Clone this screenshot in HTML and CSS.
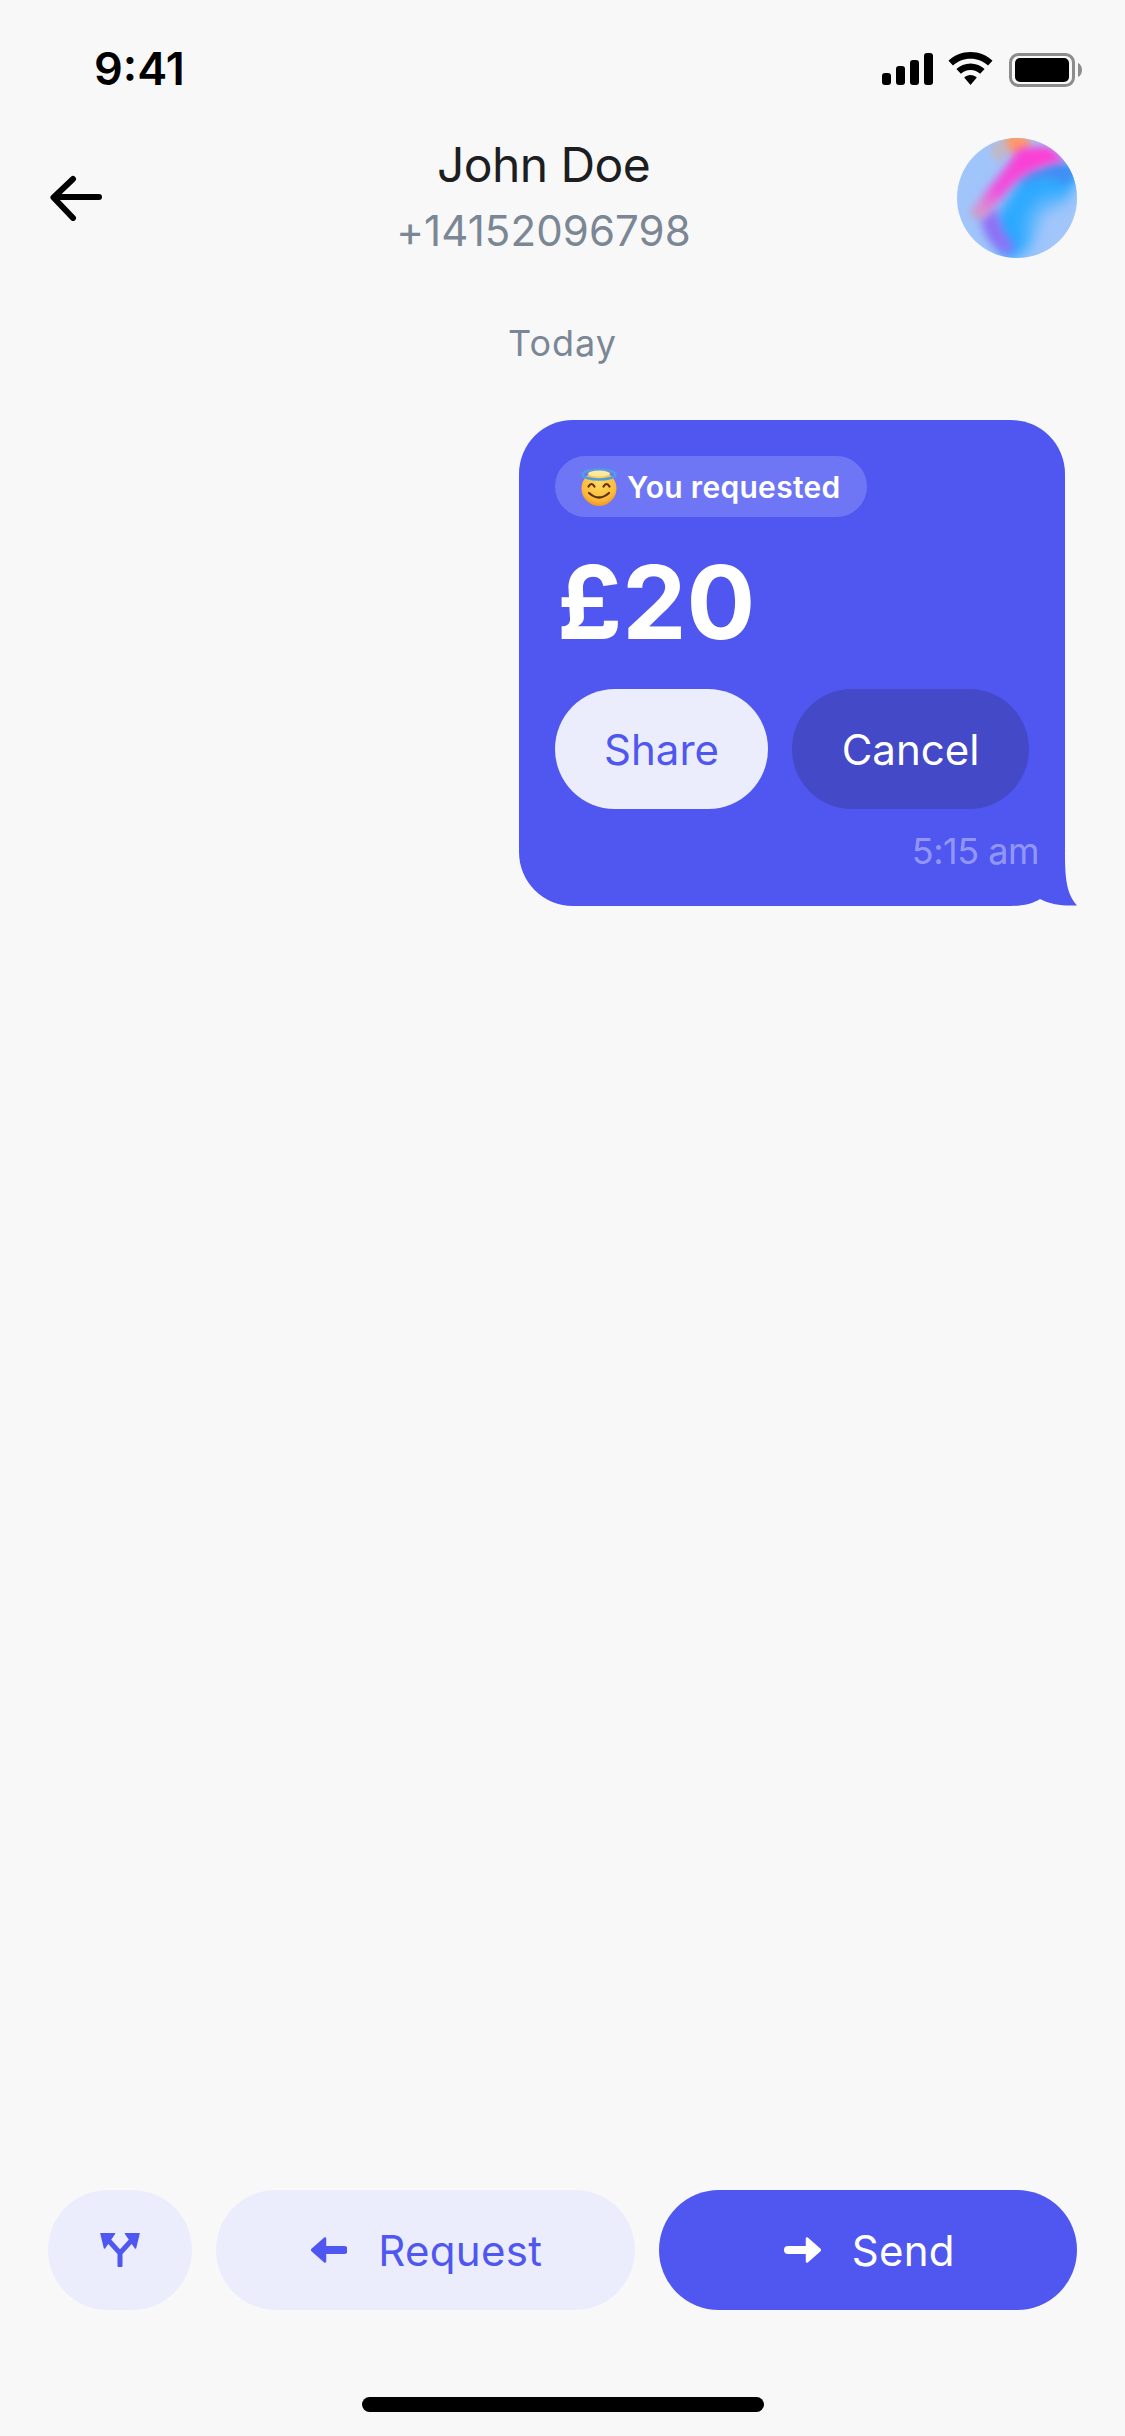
FILE: index.html
```html
<!DOCTYPE html>
<html lang="en">
<head>
<meta charset="utf-8">
<title>John Doe</title>
<link rel="stylesheet" href="styles.css">
</head>
<body>
<div class="screen">
  <div class="status">
    <span class="clock">9:41</span>
    <div class="status-icons">
      <svg class="i-signal" width="51" height="32" viewBox="0 0 51 32"><rect x="0" y="20" width="9" height="12" rx="3"/><rect x="14" y="13" width="9" height="19" rx="3"/><rect x="28" y="7" width="9" height="25" rx="3"/><rect x="42" y="0" width="9" height="32" rx="3"/></svg>
      <svg class="i-wifi" width="45" height="33" viewBox="0 0 45 33"><path d="M22.5 0C14 0 6.300 3.300 0.500 8.700L5 13.500C9.600 9.300 15.700 6.700 22.500 6.700S35.400 9.300 40 13.500L44.500 8.700C38.700 3.300 31 0 22.500 0Z"/><path d="M22.500 11.500C17 11.500 12.100 13.600 8.400 17.100L12.900 21.800C15.400 19.500 18.800 18.100 22.500 18.100S29.600 19.500 32.100 21.800L36.600 17.100C32.900 13.600 28 11.500 22.500 11.500Z"/><path d="M22.500 23C20 23 17.800 24 16.200 25.500L22.500 33L28.800 25.500C27.200 24 25 23 22.500 23Z"/></svg>
      <svg class="i-battery" width="73" height="34" viewBox="0 0 73 34"><rect x="1.500" y="1.500" width="63" height="31" rx="8" fill="none" stroke="#8c8c8c" stroke-width="3"/><rect x="6" y="5" width="54" height="24" rx="5"/><path d="M69 10C71.500 11 73 14 73 17S71.500 23 69 24Z" fill="#8c8c8c"/></svg>
    </div>
  </div>

  <header class="header">
    <div class="back">
      <svg width="54" height="46" viewBox="0 0 54 46"><path d="M51 22H7M25 4L5.500 22.500L25 43" fill="none" stroke="#000" stroke-width="6" stroke-linecap="round" stroke-linejoin="round"/></svg>
    </div>
    <div class="contact">
      <div class="name">John Doe</div>
      <div class="phone">+14152096798</div>
    </div>
    <svg class="avatar" width="120" height="120" viewBox="0 0 120 120">
      <defs>
        <clipPath id="av-clip"><circle cx="60" cy="60" r="60"/></clipPath>
        <linearGradient id="band" gradientUnits="userSpaceOnUse" x1="72" y1="18" x2="14" y2="80">
          <stop offset="0" stop-color="#fb3fd4"/>
          <stop offset="0.55" stop-color="#f04fdc"/>
          <stop offset="0.85" stop-color="#dc8fd0"/>
          <stop offset="1" stop-color="#cf9cac"/>
        </linearGradient>
        <filter id="b4" x="-50%" y="-50%" width="200%" height="200%"><feGaussianBlur stdDeviation="4"/></filter>
        <filter id="b5" x="-50%" y="-50%" width="200%" height="200%"><feGaussianBlur stdDeviation="5"/></filter>
        <filter id="b7" x="-50%" y="-50%" width="200%" height="200%"><feGaussianBlur stdDeviation="7"/></filter>
        <filter id="b12" x="-50%" y="-50%" width="200%" height="200%"><feGaussianBlur stdDeviation="12"/></filter>
      </defs>
      <g clip-path="url(#av-clip)">
        <rect width="120" height="120" fill="#a0c5fb"/>
        <path d="M125 28L66 36L36 84L48 125L70 112L112 58Z" fill="#25a8ff" filter="url(#b7)"/>
        <ellipse cx="98" cy="90" rx="24" ry="28" fill="#a3c6fb" filter="url(#b12)"/>
        <path d="M125 30L100 24L74 34L60 48L86 40L112 46Z" fill="#3f8ff3" filter="url(#b4)"/>
        <path d="M24 78C24 94 34 108 50 118L58 108C48 98 42 88 40 70Z" fill="#8f6ff5" filter="url(#b5)"/>
        <ellipse cx="60" cy="5" rx="14" ry="11" fill="#ff9a68" filter="url(#b4)"/>
        <path d="M62 10L92 8L110 23C84 27 62 38 50 54L26 82L12 76L30 52C42 38 52 24 62 10Z" fill="url(#band)" filter="url(#b4)"/>
        <ellipse cx="42" cy="13" rx="7" ry="10" fill="#c9b4bc" filter="url(#b4)"/>
      </g>
    </svg>
  </header>

  <div class="day">Today</div>

  <article class="bubble">
    <svg class="tail" width="62" height="52" viewBox="0 0 62 52"><path d="M50 0C50 26 52 40 62 51.500L55 51.500C45 51.500 35 50 25 45C19 49 10 51.500 0 51.500V0Z"/></svg>
    <div class="tag">
      <svg class="emoji" width="36" height="38" viewBox="0 0 36 38">
        <defs>
          <radialGradient id="face" cx="50%" cy="35%" r="70%"><stop offset="0" stop-color="#ffdb5e"/><stop offset="0.7" stop-color="#fdb93a"/><stop offset="1" stop-color="#e88a1e"/></radialGradient>
        </defs>
        <circle cx="18" cy="20.500" r="17.500" fill="url(#face)"/>
        <ellipse cx="18" cy="6.500" rx="16.500" ry="5" fill="none" stroke="#4f9fe0" stroke-width="2.500"/>
        <ellipse cx="18" cy="5.500" rx="11" ry="3" fill="#ffe9a0"/>
        <path d="M7.500 18.500Q10.500 13.500 13.500 18.500M22.500 18.500Q25.500 13.500 28.500 18.500" fill="none" stroke="#5a3210" stroke-width="2.200" stroke-linecap="round"/>
        <path d="M8 25Q18 34 28 25" fill="none" stroke="#5a3210" stroke-width="2.200" stroke-linecap="round"/>
      </svg>
      <span>You requested</span>
    </div>
    <div class="amount">£20</div>
    <div class="actions">
      <button class="pill pill-share pill-light">Share</button>
      <button class="pill pill-cancel pill-dark">Cancel</button>
    </div>
    <div class="time">5:15 am</div>
  </article>

  <div class="spacer"></div>

  <footer class="footer">
    <button class="pill pill-round pill-light">
      <svg width="40" height="34" viewBox="0 0 40 34"><path d="M20 32.500V20M20 20L9 8M20 20L31 8" fill="none" stroke="#4f57f0" stroke-width="5" stroke-linecap="round"/><path d="M1 .5H14.500L4.500 15Z M39 .5H25.500L35.500 15Z" fill="#4f57f0" stroke="#4f57f0" stroke-width="1.500" stroke-linejoin="round"/></svg>
    </button>
    <button class="pill pill-wide pill-light">
      <svg width="36" height="26" viewBox="0 0 36 26"><path d="M14 1.500L1 13L14 24.500Z" fill="#4f57f0" stroke="#4f57f0" stroke-width="2.500" stroke-linejoin="round"/><path d="M14 13H33" stroke="#4f57f0" stroke-width="8" stroke-linecap="round"/></svg>
      <span>Request</span>
    </button>
    <button class="pill pill-wide pill-primary">
      <svg width="37" height="26" viewBox="0 0 37 26"><path d="M23 1.500L36 13L23 24.500Z" fill="#fff" stroke="#fff" stroke-width="2.500" stroke-linejoin="round"/><path d="M4 13H23" stroke="#fff" stroke-width="8" stroke-linecap="round"/></svg>
      <span>Send</span>
    </button>
  </footer>

  <div class="home"></div>
</div>
</body>
</html>
```

FILE: styles.css
```css
* { box-sizing: border-box; }

html, body {
  margin: 0;
  padding: 0;
  background: #f8f8f9;
}

.screen {
  width: 1125px;
  height: 2436px;
  display: flex;
  flex-direction: column;
  font-family: "Inter", "Liberation Sans", sans-serif;
  overflow: hidden;
}

.status {
  height: 138px;
  padding: 0 43px 0 94px;
  display: flex;
  justify-content: space-between;
  align-items: flex-start;
}

.clock {
  margin-top: 39px;
  font-size: 45px;
  line-height: 60px;
  font-weight: 600;
  color: #000;
}

.status-icons {
  margin-top: 52px;
  display: flex;
  align-items: flex-start;
}

.i-signal { margin-top: 1px; }
.i-wifi { margin-left: 15px; }
.i-battery { margin-left: 16px; margin-top: 1px; }

.header {
  height: 120px;
  padding: 0 48px;
  display: flex;
  align-items: center;
}

.back {
  width: 82px;
  display: flex;
}

.contact {
  flex: 1;
  text-align: center;
}

.name {
  font-size: 48px;
  line-height: 66px;
  letter-spacing: -0.6px;
  color: #1c1e21;
}

.phone {
  font-size: 42px;
  line-height: 66px;
  letter-spacing: 0.1px;
  color: #7b8794;
}

.avatar {
  flex: none;
  display: block;
}

.day {
  margin-top: 63px;
  text-align: center;
  font-size: 36px;
  line-height: 44px;
  letter-spacing: 1px;
  color: #7b8794;
}

.bubble {
  position: relative;
  align-self: flex-end;
  margin-top: 55px;
  margin-right: 60px;
  padding: 36px 36px 33px;
  border-radius: 54px;
  background: #4f57f0;
  color: #fff;
}

.tag {
  display: inline-flex;
  align-items: center;
  gap: 10px;
  height: 61px;
  padding: 0 26px;
  border-radius: 31px;
  background: #6f76f5;
  font-size: 30px;
  font-weight: 600;
  letter-spacing: 0.3px;
  vertical-align: top;
}

.emoji {
  display: block;
  flex: none;
}

.amount {
  margin-top: 25px;
  padding-left: 2px;
  font-size: 102px;
  line-height: 120px;
  font-weight: 700;
}

.actions {
  margin-top: 27px;
  display: flex;
  gap: 24px;
}

.pill {
  height: 120px;
  border: 0;
  border-radius: 60px;
  font-family: inherit;
  font-size: 42px;
  display: flex;
  align-items: center;
  justify-content: center;
}

.pill-share { width: 213px; padding: 0; }
.pill-cancel { width: 237px; padding: 0; }

.pill-light {
  background: #ecedfc;
  color: #4f57f0;
}

.pill-dark {
  background: #4449c8;
  color: #fff;
}

.pill-primary {
  background: #4f57f0;
  color: #fff;
}

.time {
  position: relative;
  margin-top: 20px;
  margin-right: -10px;
  text-align: right;
  font-size: 36px;
  line-height: 44px;
  letter-spacing: -0.5px;
  color: rgba(255, 255, 255, 0.4);
}

.tail {
  position: absolute;
  right: -12px;
  bottom: 0;
  fill: #4f57f0;
}

.spacer { flex: 1; }

.footer {
  padding: 0 48px;
  display: flex;
  gap: 24px;
}

.pill-round {
  width: 144px;
  flex: none;
  padding: 0;
}

.pill-wide {
  flex: 1;
  gap: 31px;
  padding: 0 0 0 3px;
  letter-spacing: 0.3px;
}

.home {
  width: 402px;
  height: 15px;
  margin: 87px auto 24px;
  border-radius: 8px;
  background: #000;
}
```
